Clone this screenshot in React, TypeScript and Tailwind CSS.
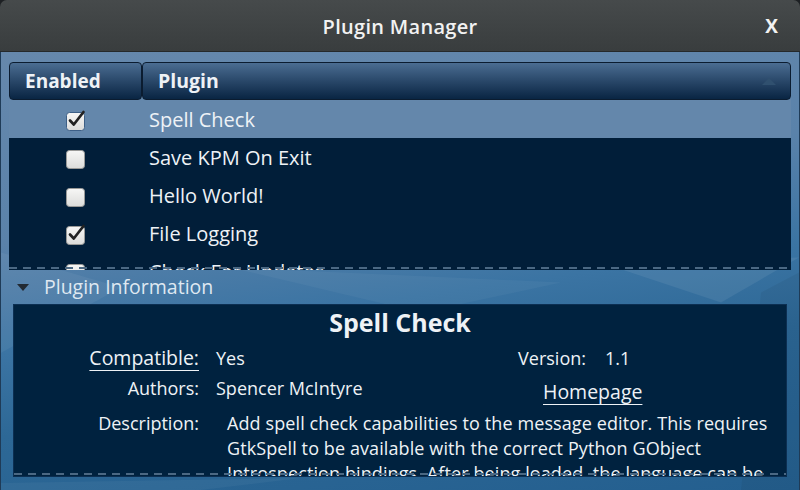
import React from "react"

const plugins = [
  { name: "Spell Check", enabled: true, selected: true },
  { name: "Save KPM On Exit", enabled: false },
  { name: "Hello World!", enabled: false },
  { name: "File Logging", enabled: true },
  { name: "Check For Updates", enabled: false },
]

function CheckBox({ checked, selected }: { checked: boolean; selected?: boolean }) {
  return (
    <svg width="24" height="24" viewBox="0 0 24 24">
      <defs>
        <linearGradient id="cbg" x1="0" y1="0" x2="0" y2="1">
          <stop offset="0" stopColor="#f7f7f6" />
          <stop offset="1" stopColor="#dcdcda" />
        </linearGradient>
      </defs>
      <rect x="2.5" y="4.5" width="18" height="18" rx="3" fill="url(#cbg)" stroke={selected ? "#3d5f86" : "#9a9a98"} />
      {checked && (
        <path d="M6 12.5 L9.8 16.5 L19.5 4" fill="none" stroke="#222" strokeWidth="2.7" strokeLinecap="round" strokeLinejoin="round" />
      )}
    </svg>
  )
}

function Dashes() {
  return (
    <div className="absolute left-0 right-0 bottom-[1px] h-[2px] bg-[repeating-linear-gradient(90deg,#4b6883_0px,#4b6883_8px,transparent_8px,transparent_14px)]"></div>
  )
}

export default function App() {
  return (
    <div className="w-[800px] h-[490px] flex flex-col overflow-hidden bg-[#1d2023] font-['Open_Sans',sans-serif] text-[#eef2f6]">
      {/* title bar */}
      <div className="relative h-[52px] shrink-0 rounded-t-[7px] bg-gradient-to-b from-[#464a4b] to-[#393d3e] border-b border-[#25292b] flex items-center justify-center pt-[3px]">
        <span className="text-[20px] font-semibold text-[#f2f2f2] tracking-[0.3px]">Plugin Manager</span>
        <span className="absolute right-[22px] top-[12px] text-[19px] font-bold text-[#f2f2f2]">X</span>
      </div>

      {/* body */}
      <div className="relative flex-1 flex flex-col bg-[linear-gradient(172deg,#6688ac_0%,#5a82aa_35%,#3b74a3_55%,#2d6896_70%,#245f8f_100%)] border-x border-[#1f3b57]">
        <svg className="absolute inset-0 w-full h-full" viewBox="0 0 798 437" preserveAspectRatio="none">
          <polygon points="0,200 120,235 0,300" fill="#ffffff" opacity="0.05" />
          <polygon points="230,215 560,230 420,260" fill="#ffffff" opacity="0.04" />
          <polygon points="600,210 720,250 798,205" fill="#ffffff" opacity="0.07" />
          <polygon points="760,240 798,220 798,437 740,437" fill="#000000" opacity="0.05" />
          <polygon points="0,430 300,425 200,437 0,437" fill="#ffffff" opacity="0.04" />
        </svg>

        {/* plugin list */}
        <div className="relative mt-[10px] mx-[8px] h-[208px] flex flex-col bg-[#011e39] overflow-hidden">
          <div className="h-[38px] shrink-0 flex bg-[#6487ab]">
            <div className="w-[133px] h-full rounded-[4px] border border-[#0b1c30] bg-gradient-to-b from-[#4b6d92] to-[#092543] flex items-center pl-[15px] text-[19px] font-bold">
              Enabled
            </div>
            <div className="relative flex-1 h-full rounded-[4px] border border-[#0b1c30] bg-gradient-to-b from-[#4b6d92] to-[#092543] flex items-center pl-[15px] text-[19.5px] font-bold">
              Plugin
              <svg className="absolute right-[14px] top-[14px]" width="14" height="8" viewBox="0 0 14 8">
                <polygon points="0,8 7,1 14,8" fill="#30506f" />
              </svg>
            </div>
          </div>
          {plugins.map((p) => (
            <div key={p.name} className={`h-[38px] shrink-0 flex items-center pt-[2px] ${p.selected ? "bg-[#6487ab]" : ""}`}>
              <div className="w-[134px] flex justify-center">
                <CheckBox checked={p.enabled} selected={p.selected} />
              </div>
              <span className="pl-[6px] text-[20px]">{p.name}</span>
            </div>
          ))}
          <Dashes />
        </div>

        {/* expander */}
        <div className="relative h-[34px] shrink-0 flex items-center pl-[16px] gap-[15px]">
          <svg width="12" height="7" viewBox="0 0 12 7">
            <polygon points="0,0 12,0 6,7" fill="#222a33" />
          </svg>
          <span className="text-[19.5px] text-[#dfe8f1]">Plugin Information</span>
        </div>

        {/* info panel */}
        <div className="relative mx-[12px] h-[173px] bg-[#00223f] border border-[#0c2f52] overflow-hidden pt-[3px]">
          <div className="text-center text-[25px] font-bold leading-[28px]">Spell Check</div>
          <div className="mt-[7px] grid grid-cols-[185px_253px_100px_1fr] gap-x-[17px] text-[18px] leading-[30px]">
            <span className="text-right underline underline-offset-[5px] text-[19.5px]">Compatible:</span>
            <span>Yes</span>
            <span className="text-right">Version:</span>
            <span className="pl-[2px]">1.1</span>
          </div>
          <div className="grid grid-cols-[185px_253px_1fr] gap-x-[17px] text-[18px] leading-[30px]">
            <span className="text-right">Authors:</span>
            <span>Spencer McIntyre</span>
            <span className="pl-[57px] pt-[4px] underline underline-offset-[5px] text-[19.5px]">Homepage</span>
          </div>
          <div className="mt-[4px] grid grid-cols-[185px_1fr] gap-x-[17px] text-[18px] leading-[25px]">
            <span className="text-right">Description:</span>
            <span className="pl-[11px] pr-[12px] tracking-[0.1px]">
              Add spell check capabilities to the message editor. This requires GtkSpell to be available with the correct Python GObject Introspection bindings. After being loaded, the language can be changed from the default of en_US in the plugin's configuration.
            </span>
          </div>
          <Dashes />
        </div>
      </div>
    </div>
  )
}
